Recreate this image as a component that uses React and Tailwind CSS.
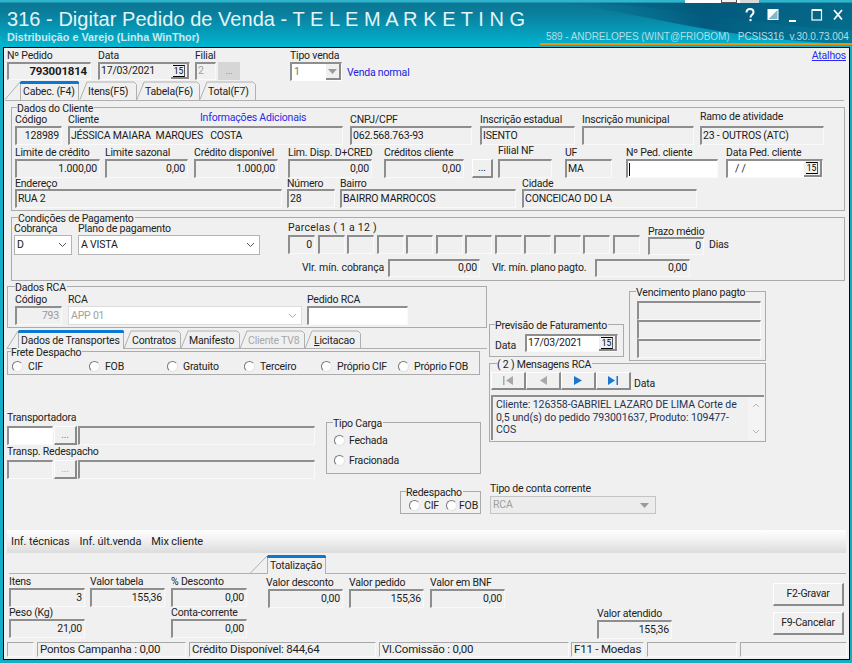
import React from 'react';

const Sunken = ({ className = '', children }) => (
  <div className={`box-border border-t-2 border-l-2 border-t-[#8e8e8e] border-l-[#8e8e8e] border-r border-b border-r-[#fafafa] border-b-[#fafafa] flex items-center pl-px pr-[2px] overflow-hidden whitespace-nowrap leading-none text-[#1a1a1a] ${className}`}>{children}</div>
);

const Field = ({ l, lc = 'h-[13px] leading-[13px]', c = '', b = 'h-[19px]', children }) => (
  <div className={`shrink-0 flex flex-col ${c}`}>
    <div className={`whitespace-nowrap text-[#222] ${lc}`}>{l}</div>
    <Sunken className={`w-full ${b}`}>{children}</Sunken>
  </div>
);

const Group = ({ title, className = '', tc = 'left-[5px]', children }) => (
  <div className={`relative box-border border border-[#ababab] shrink-0 ${className}`}>
    <div className={`absolute -top-[4px] h-[10px] ${tc} bg-[#f0f0f0] pr-[1px] whitespace-nowrap leading-[10px] text-[#222]`}>{title}</div>
    {children}
  </div>
);

const Raised = ({ className = '', children }) => (
  <div className={`box-border shrink-0 flex items-center justify-center border-t border-l border-t-white border-l-white border-b-2 border-r-2 border-b-[#8a8a8a] border-r-[#8a8a8a] leading-none text-[#222] ${className}`}>{children}</div>
);

const Cal = () => (
  <div className="ml-auto -mr-[2px] box-border w-[18px] h-full flex items-center justify-center border-b-2 border-r-2 border-b-[#8a8a8a] border-r-[#8a8a8a] bg-[#f0f0f0]">
    <span className="box-border block w-[12px] h-[12px] pt-px border-t border-b border-r border-t-black border-b-black border-r-[#555] text-[8.5px] leading-[9px] tracking-normal text-center text-black">15</span>
  </div>
);

const Chevron = ({ c = '#555' }) => (
  <svg width="9" height="6" viewBox="0 0 9 6" className="ml-auto mr-[4px] shrink-0"><path d="M1 1l3.5 3.5L8 1" fill="none" stroke={c} strokeWidth="1" /></svg>
);

const Tri = () => (
  <svg width="9" height="5" viewBox="0 0 9 5" className="shrink-0"><path d="M0 0h9L4.500 5z" fill="#9a9a9a" /></svg>
);

const Radio = ({ t, c = '', g = 'ml-[5px]' }) => (
  <div className={`flex items-center shrink-0 ${c}`}>
    <span className="box-border w-[11px] h-[11px] rounded-full border border-t-[#777] border-l-[#777] border-r-[#e4e4e4] border-b-[#e4e4e4] bg-white shrink-0" />
    <span className={`${g} leading-[13px] text-[#222] whitespace-nowrap`}>{t}</span>
  </div>
);

const Tab = ({ t, w, c, active, disabled, slant = 7, pad = 'pl-[8px]' }) => (
  <div className={`relative h-[19px] shrink-0 ${c}`}>
    <svg width={w} height="19" className="absolute left-0 top-0 overflow-visible">
      {active ? (
        <>
          <path d={`M${-slant} 18.5L0 1`} stroke="#b0b0b0" fill="none" />
          <rect x="0" y="0" width={w} height="19" fill="#f0f0f0" />
          <path d={`M0.5 19V1H${w - 0.5}V19`} stroke="#b0b0b0" fill="none" />
          <path d={`M0 2C0 0.5 1 0 2 0H${w - 2}C${w - 1} 0 ${w} 0.5 ${w} 2V3H0z`} fill="#0a78d2" />
        </>
      ) : (
        <path d={`M0 18.5L${slant} 1H${w - 3}L${w - 0.5} 3.5V19`} stroke="#b0b0b0" fill="none" />
      )}
    </svg>
    <div className={`relative h-full flex items-end pb-[1px] whitespace-nowrap leading-[14px] ${pad} ${disabled ? 'text-[#a8a8a8]' : 'text-[#222]'}`}>{t}</div>
  </div>
);

const NavBtn = ({ children }) => (
  <Raised className="w-[35px] h-[18px]">{children}</Raised>
);

const Swoosh = () => (
  <svg width="852" height="47" viewBox="0 0 852 47" className="absolute left-0 top-0">
    <defs>
      <linearGradient id="dk" x1="0" y1="0" x2="1" y2="0">
        <stop offset="0" stopColor="#04688a" stopOpacity="0" />
        <stop offset="0.5" stopColor="#03587c" stopOpacity="0.95" />
        <stop offset="1" stopColor="#05708f" stopOpacity="0.8" />
      </linearGradient>
    </defs>
    <path d="M560 3C640 12 720 40 852 44V3z" fill="url(#dk)" />
    <path d="M600 3C680 8 760 26 852 30V3z" fill="#03587c" fillOpacity="0.35" />
  </svg>
);

const Icons = () => (
  <svg width="110" height="24" viewBox="0 0 110 24" className="absolute left-[742px] top-[4px]">
    <path d="M4.500 8.500C4.500 6 6 5 8 5s3.500 1 3.500 3.200c0 2.500-3 2.800-3 5.300" fill="none" stroke="#fff" strokeWidth="2" />
    <rect x="7.500" y="15" width="2" height="2.200" fill="#fff" />
    <rect x="26" y="5.500" width="10" height="10" fill="#7fb9c9" stroke="#fff" strokeWidth="1" />
    <path d="M26 5.500h10L26 15.500z" fill="#fff" />
    <rect x="47" y="16" width="7" height="2" fill="#fff" />
    <rect x="70" y="6" width="9.500" height="10" fill="none" stroke="#fff" strokeWidth="1.200" />
    <rect x="70" y="5" width="9.500" height="2" fill="#fff" />
    <path d="M92 6l8 9.500M100 6l-8 9.500" stroke="#fff" strokeWidth="1.800" fill="none" />
  </svg>
);

export default function App() {
  const parcelas = [0, 1, 2, 3, 4, 5, 6, 7, 8, 9, 10, 11];
  return (
    <div className="relative w-[852px] h-[663px] overflow-hidden bg-[#14adc6] text-[10.5px] tracking-[-0.2px] [font-family:Roboto,'Liberation_Sans',sans-serif]">
      {/* title bar */}
      <div className="relative h-[47px] tracking-normal bg-[linear-gradient(180deg,#2fb4cc_0,#2fb4cc_2px,#0a7794_3px,#0a7f9d_14px,#04a3c0_36px,#00b8d2_47px)]">
        <Swoosh />
        <div className="absolute left-[685px] top-0 w-[74px] h-[3px] bg-white flex justify-end">
          <span className="box-border w-[16px] h-[3px] mr-[22px] border-l border-r border-b border-[#555] bg-[#f0f0f0]" />
          <span className="absolute right-0 w-[19px] h-[3px] bg-[#d8d8d8]" />
        </div>
        <div className="relative pl-[7px] pt-[9px] [font-family:'Liberation_Sans',Arial,sans-serif]">
          <div className="text-[20px] leading-[21px] tracking-[0.04px] text-[#e3f5f8] whitespace-pre">316 - Digitar Pedido de Venda - T E L E M A R K E T I N G</div>
          <div className="text-[10.8px] leading-[12px] mt-[1px] font-bold text-[#c6eaf1] whitespace-nowrap">Distribuição e Varejo (Linha WinThor)</div>
        </div>
        <Icons />
        <div className="absolute right-0 top-[31px] w-[312px] h-[14px] border-b-[2px] border-b-[#f0900f] box-border pl-[6px] whitespace-pre text-[10px] tracking-[-0.05px] leading-[12px] text-[#b4dde6] [font-family:'Liberation_Sans',Arial,sans-serif]">589 - ANDRELOPES (WINT@FRIOBOM)   PCSIS316  v.30.0.73.004</div>
      </div>

      {/* client */}
      <div className="box-border ml-[3px] w-[847px] h-[613px] border border-black bg-[#f0f0f0] overflow-hidden">
        {/* pedido row */}
        <div className="flex items-start pt-[1px]">
          <Field l="Nº Pedido" c="ml-[3px] w-[84px]" b="h-[18px]"><span className="ml-auto pr-[1px] font-bold text-[11.5px]">793001814</span></Field>
          <Field l="Data" c="ml-[7px] w-[92px]" b="h-[18px]"><span>17/03/2021</span><Cal /></Field>
          <Field l="Filial" c="ml-[5px] w-[21px]" b="h-[18px]"><span className="text-[#a0a0a0]">2</span></Field>
          <div className="mt-[13px] ml-[2px] w-[22px] h-[18px] bg-[#d6d6d6] flex items-center justify-center text-[10px] text-[#999] leading-none">...</div>
          <div className="ml-[50px] w-[52px] shrink-0">
            <div className="h-[13px] leading-[13px] text-[#222] whitespace-nowrap">Tipo venda</div>
            <div className="box-border h-[19px] border-t-2 border-l-2 border-t-[#8e8e8e] border-l-[#8e8e8e] border-r border-b border-r-white border-b-white bg-white flex items-center pl-[2px] text-[#777]">1
              <div className="ml-auto box-border w-[15px] h-full flex items-center justify-center bg-[#f0f0f0] border-b-2 border-r-2 border-b-[#8a8a8a] border-r-[#8a8a8a]"><Tri /></div>
            </div>
          </div>
          <div className="ml-[5px] mt-[17px] leading-[13px] text-[#2222e0] whitespace-nowrap">Venda normal</div>
          <div className="ml-auto mr-[3px] leading-[13px] text-[#2a2af0] underline">Atalhos</div>
        </div>

        {/* top tabs */}
        <div className="ml-[1px] mr-[5px] h-[20px] border-b border-b-[#b0b0b0] flex pl-[15px]">
          <Tab t="Cabec. (F4)" w={59} c="w-[59px]" active slant={15} pad="pl-[3px]" />
          <Tab t="Itens(F5)" w={57} c="w-[57px] ml-px" />
          <Tab t="Tabela(F6)" w={63} c="w-[63px]" />
          <Tab t="Total(F7)" w={56} c="w-[56px]" />
        </div>

        {/* Dados do Cliente */}
        <Group title="Dados do Cliente" className="mt-[6px] ml-[7px] w-[834px] h-[104px]">
          <div className="flex pt-[5px]">
            <Field l="Código" c="ml-[3px] w-[47px]"><span className="ml-auto">128989</span></Field>
            <Field c="ml-[6px] w-[275px]" l={<div className="flex"><span>Cliente</span><span className="ml-[101px] -mt-[2px] text-[#2a2ae8]">Informações Adicionais</span></div>}>JÉSSICA MAIARA&nbsp; MARQUES&nbsp;&nbsp; COSTA</Field>
            <Field l="CNPJ/CPF" c="ml-[7px] w-[122px]">062.568.763-93</Field>
            <Field l="Inscrição estadual" c="ml-[8px] w-[95px]">ISENTO</Field>
            <Field l="Inscrição municipal" c="ml-[7px] w-[112px]" />
            <Field l="Ramo de atividade" c="ml-[6px] w-[124px]" lc="h-[13px] leading-[13px] -mt-[3px] mb-[3px]">23 - OUTROS (ATC)</Field>
          </div>
          <div className="flex items-end mt-[1px]">
            <Field l="Limite de crédito" c="ml-[3px] w-[85px]"><span className="ml-auto">1.000,00</span></Field>
            <Field l="Limite sazonal" c="ml-[5px] w-[83px]"><span className="ml-auto">0,00</span></Field>
            <Field l="Crédito disponível" c="ml-[6px] w-[84px]"><span className="ml-auto">1.000,00</span></Field>
            <Field l="Lim. Disp. D+CRED" c="ml-[10px] w-[84px]"><span className="ml-auto">0,00</span></Field>
            <Field l="Créditos cliente" c="ml-[12px] w-[80px]"><span className="ml-auto">0,00</span></Field>
            <Raised className="ml-[8px] w-[21px] h-[19px] text-[10px]">...</Raised>
            <Field l="Filial NF" c="ml-[5px] w-[54px]" lc="h-[13px] leading-[13px] -mt-[2px] mb-[2px]" />
            <Field l="UF" c="ml-[13px] w-[47px]">MA</Field>
            <Field l="Nº Ped. cliente" c="ml-[14px] w-[92px]" b="h-[19px] bg-white"><span className="w-px h-[13px] bg-black" /></Field>
            <Field l="Data Ped. cliente" c="ml-[8px] w-[97px]" b="h-[19px] bg-white"><span className="pl-[6px] whitespace-pre">/ /</span><Cal /></Field>
          </div>
          <div className="flex">
            <Field l="Endereço" c="ml-[3px] w-[267px]" lc="h-[11px] leading-[11px]">RUA 2</Field>
            <Field l="Número" c="ml-[5px] w-[48px]" lc="h-[11px] leading-[11px]">28</Field>
            <Field l="Bairro" c="ml-[5px] w-[176px]" lc="h-[11px] leading-[11px]">BAIRRO MARROCOS</Field>
            <Field l="Cidade" c="ml-[6px] w-[175px]" lc="h-[11px] leading-[11px]">CONCEICAO DO LA</Field>
          </div>
        </Group>

        {/* Condições */}
        <Group title="Condições de Pagamento" tc="left-[6px]" className="mt-[6px] ml-[7px] w-[834px] h-[64px]">
          <div className="flex items-start pt-[4px]">
            <div className="ml-[2px] w-[58px] shrink-0">
              <div className="h-[13px] leading-[13px] text-[#222]">Cobrança</div>
              <div className="box-border h-[20px] border border-[#b4b4b4] bg-white flex items-center pl-[2px] text-[#1a1a1a]">D<Chevron /></div>
            </div>
            <div className="ml-[6px] w-[182px] shrink-0">
              <div className="h-[13px] leading-[13px] text-[#222]">Plano de pagamento</div>
              <div className="box-border h-[20px] border border-[#b4b4b4] bg-white flex items-center pl-[2px] text-[#1a1a1a]">A VISTA<Chevron /></div>
            </div>
            <div className="ml-[28px] w-[352px] shrink-0">
              <div className="h-[13px] leading-[11px] tracking-[0.25px] text-[#222]">Parcelas ( 1 a 12 )</div>
              <div className="grid grid-cols-12 gap-[2.500px]">
                {parcelas.map((i) => (
                  <Sunken key={i} className="h-[19px] justify-end">{i === 0 ? '0' : ''}</Sunken>
                ))}
              </div>
            </div>
            <Field l="Prazo médio" c="ml-[8px] w-[56px]" lc="h-[15px] leading-[13px] pt-[3px]" b="h-[18px]"><span className="ml-auto">0</span></Field>
            <div className="ml-[5px] mt-[16px] leading-[13px] text-[#222]">Dias</div>
          </div>
          <div className="flex items-center mt-[4px]">
            <div className="ml-[290px] w-[86px] shrink-0 leading-[18px] tracking-[-0.1px] whitespace-nowrap text-[#222]">Vlr. mín. cobrança</div>
            <Sunken className="w-[92px] h-[18px] justify-end">0,00</Sunken>
            <div className="ml-[12px] w-[103px] shrink-0 leading-[18px] whitespace-nowrap text-[#222]">Vlr. mín. plano pagto.</div>
            <Sunken className="w-[95px] h-[18px] justify-end">0,00</Sunken>
          </div>
        </Group>

        {/* middle */}
        <div className="flex mt-[5px]">
          <div className="ml-[3px] w-[480px] shrink-0">
            <Group title="Dados RCA" tc="left-[7px]" className="w-[480px] h-[42px]">
              <div className="flex pt-[6px]">
                <Field l="Código" c="ml-[7px] w-[47px]"><span className="ml-auto text-[#999]">793</span></Field>
                <div className="ml-[6px] w-[234px] shrink-0">
                  <div className="h-[13px] leading-[13px] text-[#222]">RCA</div>
                  <div className="box-border h-[19px] border border-[#dcdcdc] bg-white flex items-center pl-[2px] text-[#a0a0a0]">APP 01<Chevron c="#aaa" /></div>
                </div>
                <Field l="Pedido RCA" c="ml-[5px] w-[101px]" b="h-[19px] bg-white" />
              </div>
            </Group>

            <div className="mt-[2px] h-[19px] border-b border-b-[#b0b0b0] flex pl-[11px]">
              <Tab t="Dados de Transportes" w={106} c="w-[106px]" active slant={11} pad="pl-[3px]" />
              <Tab t="Contratos" w={57} c="w-[57px]" />
              <Tab t="Manifesto" w={59} c="w-[59px]" />
              <Tab t="Cliente TV8" w={65} c="w-[65px]" disabled />
              <Tab t={<span><u>L</u>icitacao</span>} w={56} c="w-[56px]" pad="pl-[9px]" />
            </div>

            <Group title="Frete Despacho" tc="left-[3px]" className="mt-[2px] w-[473px] h-[24px]">
              <div className="flex pt-[8px] pl-[4px]">
                <Radio t="CIF" c="w-[77px]" />
                <Radio t="FOB" c="w-[78px]" />
                <Radio t="Gratuito" c="w-[77px]" />
                <Radio t="Terceiro" c="w-[77px]" />
                <Radio t="Próprio CIF" c="w-[77px]" />
                <Radio t="Próprio FOB" />
              </div>
            </Group>

            <div className="flex mt-[36px]">
              <div className="w-[319px] shrink-0">
                <div className="h-[15px] leading-[13px] text-[#222]">Transportadora</div>
                <div className="flex h-[19px]">
                  <Sunken className="w-[46px] h-full bg-white" />
                  <Raised className="ml-px w-[23px] h-full text-[10px] text-[#777]">...</Raised>
                  <Sunken className="ml-px w-[237px] h-full" />
                </div>
                <div className="h-[15px] leading-[13px] text-[#222]">Transp. Redespacho</div>
                <div className="flex h-[19px]">
                  <Sunken className="w-[46px] h-full" />
                  <Raised className="ml-px w-[23px] h-full text-[10px] text-[#aaa]">...</Raised>
                  <Sunken className="ml-px w-[237px] h-full" />
                </div>
              </div>
              <Group title="Tipo Carga" tc="left-[6px]" className="mt-[11px] w-[155px] h-[52px]">
                <div className="pt-[11px] pl-[7px]">
                  <Radio t="Fechada" g="ml-[4px]" />
                  <Radio t="Fracionada" g="ml-[4px]" c="mt-[7px]" />
                </div>
              </Group>
            </div>

            <Group title="Redespacho" tc="left-[5px]" className="mt-[12px] ml-[393px] w-[81px] h-[23px]">
              <div className="flex pt-[7px] pl-[8px]">
                <Radio t="CIF" c="w-[37px]" g="ml-[4px]" />
                <Radio t="FOB" g="ml-[2px]" />
              </div>
            </Group>
          </div>

          <div className="ml-[2px] w-[277px] shrink-0 pt-[5px]">
            <div className="flex items-end">
              <Group title="Previsão de Faturamento" tc="left-[5px]" className="w-[135px] h-[33px] mb-[4px]">
                <div className="flex items-end pt-[9px] pl-[5px]">
                  <div className="w-[30px] leading-[13px] text-[#222]">Data</div>
                  <Sunken className="w-[93px] h-[18px] bg-white">17/03/2021<Cal /></Sunken>
                </div>
              </Group>
              <Group title="Vencimento plano pagto" tc="left-[6px]" className="ml-[5px] w-[137px] h-[70px]">
                <div className="flex flex-col pt-[9px] pl-[7px]">
                  <Sunken className="w-[124px] h-[19px]" />
                  <Sunken className="w-[124px] h-[19px]" />
                  <Sunken className="w-[124px] h-[19px]" />
                </div>
              </Group>
            </div>

            <Group title="( 2 ) Mensagens RCA" tc="left-[7px]" className="mt-[2px] w-[277px] h-[79px]">
              <div className="flex items-end pt-[8px] pl-px">
                <NavBtn><svg width="12" height="9" viewBox="0 0 12 9"><path d="M1 0h1.500v9H1zM11 0v9L4 4.500z" fill="#a8a8a8" /></svg></NavBtn>
                <NavBtn><svg width="8" height="9" viewBox="0 0 8 9"><path d="M8 0v9L1 4.500z" fill="#a8a8a8" /></svg></NavBtn>
                <NavBtn><svg width="8" height="9" viewBox="0 0 8 9"><path d="M0 0v9L8 4.500z" fill="#1a78d0" /></svg></NavBtn>
                <NavBtn><svg width="12" height="9" viewBox="0 0 12 9"><path d="M1 0v9L8 4.500zM9.500 0H11v9H9.500z" fill="#1a78d0" /></svg></NavBtn>
                <div className="ml-[3px] leading-[13px] text-[#222]">Data</div>
              </div>
              <div className="box-border mt-[5px] ml-px w-[273px] h-[45px] border-t-2 border-l-2 border-t-[#8e8e8e] border-l-[#8e8e8e] flex">
                <div className="flex-1 pl-[3px] pt-[2px] leading-[12.5px] tracking-[-0.08px] text-[#1e3456] whitespace-nowrap">Cliente: 126358-GABRIEL LAZARO DE LIMA Corte de<br />0,5 und(s) do pedido 793001637, Produto: 109477-<br />COS</div>
                <div className="w-[16px] flex flex-col items-center justify-between py-[6px] bg-[#f4f4f4]">
                  <svg width="8" height="5" viewBox="0 0 8 5"><path d="M1 4l3-3 3 3" fill="none" stroke="#b4b4b4" /></svg>
                  <svg width="8" height="5" viewBox="0 0 8 5"><path d="M1 1l3 3 3-3" fill="none" stroke="#b4b4b4" /></svg>
                </div>
              </div>
            </Group>

            <div className="mt-[40px] ml-px h-[13px] leading-[13px] text-[#222]">Tipo de conta corrente</div>
            <div className="box-border mt-px ml-px w-[166px] h-[18px] border border-[#c4c4c4] bg-[#ececec] flex items-center px-[2px] text-[#a0a0a0]">RCA<span className="ml-auto mr-[4px] flex"><Tri /></span></div>
          </div>
        </div>

        {/* toolbar */}
        <div className="mt-[16px] ml-[3px] w-[839px] h-[23px] bg-[linear-gradient(180deg,#ffffff,#f4f4f4_35%,#dcdcdc)] flex items-center text-[#222] text-[11px] tracking-[-0.1px] leading-none">
          <span className="ml-[4px]">Inf. técnicas</span>
          <span className="ml-[10px]">Inf. últ.venda</span>
          <span className="ml-[10px]">Mix cliente</span>
        </div>

        {/* totalização */}
        <div className="mt-[2px] ml-[5px] w-[837px] h-[19px] border-b border-b-[#b0b0b0] flex pl-[258px]">
          <Tab t="Totalização" w={59} c="w-[59px]" active slant={17} pad="pl-[3px]" />
        </div>

        <div className="flex items-start h-[68px]">
          <div className="ml-[5px] w-[76px] shrink-0 pt-px">
            <Field l="Itens" c="w-full"><span className="ml-auto">3</span></Field>
            <Field l="Peso (Kg)" c="w-full" lc="h-[12px] leading-[12px]"><span className="ml-auto">21,00</span></Field>
          </div>
          <div className="ml-[5px] w-[75px] shrink-0 pt-px">
            <Field l="Valor tabela" c="w-full"><span className="ml-auto">155,36</span></Field>
          </div>
          <div className="ml-[6px] w-[76px] shrink-0 pt-px">
            <Field l="% Desconto" c="w-full"><span className="ml-auto">0,00</span></Field>
            <Field l="Conta-corrente" c="w-full" lc="h-[12px] leading-[12px]"><span className="ml-auto">0,00</span></Field>
          </div>
          <div className="ml-[21px] w-[75px] shrink-0 pt-[2px]">
            <Field l={<span className="-ml-[2px]">Valor desconto</span>} c="w-full"><span className="ml-auto">0,00</span></Field>
          </div>
          <div className="ml-[6px] w-[75px] shrink-0 pt-[2px]">
            <Field l="Valor pedido" c="w-full"><span className="ml-auto">155,36</span></Field>
          </div>
          <div className="ml-[6px] w-[75px] shrink-0 pt-[2px]">
            <Field l="Valor em BNF" c="w-full"><span className="ml-auto">0,00</span></Field>
          </div>
          <div className="ml-[92px] w-[75px] shrink-0 pt-[33px]">
            <Field l="Valor atendido" c="w-full"><span className="ml-auto">155,36</span></Field>
          </div>
          <div className="ml-[101px] w-[71px] shrink-0 pt-[9px]">
            <Raised className="w-full h-[23px]">F2-Gravar</Raised>
            <Raised className="w-full h-[23px] mt-[6px]">F9-Cancelar</Raised>
          </div>
        </div>

        {/* status */}
        <div className="flex ml-[3px] h-[15px] text-[11.5px] leading-none text-[#222]">
          {[
            ['w-[27px]', ''],
            ['ml-[3px] w-[149px]', 'Pontos Campanha : 0,00'],
            ['ml-[3px] w-[187px]', 'Crédito Disponível: 844,64'],
            ['ml-[3px] w-[190px]', 'Vl.Comissão : 0,00'],
            ['ml-[2px] w-[73px]', 'F11 - Moedas'],
            ['ml-[3px] w-[90px]', ''],
            ['ml-[3px] w-[107px]', ''],
          ].map(([c, t], i) => (
            <div key={i} className={`box-border shrink-0 border-t border-l border-t-[#a8a8a8] border-l-[#a8a8a8] border-r border-b border-r-[#fafafa] border-b-[#fafafa] flex items-center pl-[2px] whitespace-nowrap ${c}`}>{t}</div>
          ))}
        </div>
      </div>
    </div>
  );
}
